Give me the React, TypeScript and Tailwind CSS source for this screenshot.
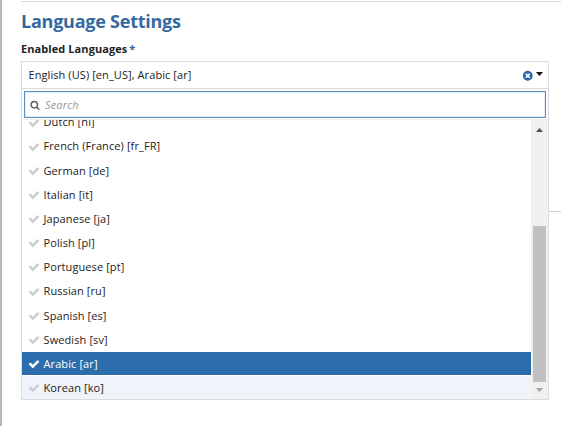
const CHECK =
  "M1671 566q0 40-28 68l-724 724-136 136q-28 28-68 28t-68-28l-136-136-362-362q-28-28-28-68t28-68l136-136q28-28 68-28t68 28l294 295 656-657q28-28 68-28t68 28l136 136q28 28 28 68z";
const CLEAR =
  "M1277 1122q0-26-19-45l-181-181 181-181q19-19 19-45 0-27-19-46l-90-90q-19-19-46-19-26 0-45 19l-181 181-181-181q-19-19-45-19-27 0-46 19l-90 90q-19 19-19 46 0 26 19 45l181 181-181 181q-19 19-19 45 0 27 19 46l90 90q19 19 46 19 26 0 45-19l181-181 181 181q19 19 45 19 27 0 46-19l90-90q19-19 19-46zm387-226q0 209-103 385.5t-279.5 279.5-385.5 103-385.5-103-279.5-279.5-103-385.5 103-385.5 279.5-279.5 385.5-103 385.5 103 279.5 279.5 103 385.5z";
const SEARCH =
  "M1216 832q0-185-131.5-316.5t-316.5-131.5-316.5 131.5-131.5 316.5 131.5 316.5 316.5 131.5 316.5-131.5 131.5-316.5zm512 832q0 52-38 90t-90 38q-54 0-90-38l-343-342q-179 124-399 124-143 0-273.5-55.5t-225-150-150-225-55.5-273.5 55.5-273.5 150-225 225-150 273.5-55.5 273.5 55.5 225 150 150 225 55.5 273.5q0 220-124 399l343 343q37 37 37 90z";

function Icon({ d, className }: { d: string; className: string }) {
  return (
    <svg viewBox="0 0 1792 1792" className={className} fill="currentColor" aria-hidden="true">
      <path d={d} />
    </svg>
  );
}

type State = "normal" | "selected" | "hover";

const LANGUAGES: { label: string; state: State }[] = [
  { label: "Dutch [nl]", state: "normal" },
  { label: "French (France) [fr_FR]", state: "normal" },
  { label: "German [de]", state: "normal" },
  { label: "Italian [it]", state: "normal" },
  { label: "Japanese [ja]", state: "normal" },
  { label: "Polish [pl]", state: "normal" },
  { label: "Portuguese [pt]", state: "normal" },
  { label: "Russian [ru]", state: "normal" },
  { label: "Spanish [es]", state: "normal" },
  { label: "Swedish [sv]", state: "normal" },
  { label: "Arabic [ar]", state: "selected" },
  { label: "Korean [ko]", state: "hover" },
];

const ROW: Record<State, string> = {
  normal: "text-[#222]",
  selected: "bg-[#2c6dac] text-white",
  hover: "bg-[#eff4fa] text-[#222]",
};

function Option({ label, state }: { label: string; state: State }) {
  return (
    <li className={`flex h-[24.17px] shrink-0 items-center border-b border-white pt-[1.65px] pl-[6px] text-[11px] tracking-[0.1px] last:-mb-px ${ROW[state]}`}>
      <Icon d={CHECK} className={`mr-[3.5px] size-[12px] ${state === "selected" ? "text-white" : "text-[#cdcdcd]"}`} />
      <span>{label}</span>
    </li>
  );
}

export default function App() {
  return (
    <main className="relative flex h-[426px] w-[561px] flex-col overflow-hidden border-l-2 border-[#b7b7b7] bg-white pl-[19px] font-['Open_Sans','Noto_Sans',sans-serif] text-[#222]">
      <div className="mt-px h-px shrink-0 bg-[#d9d9d9]" />
      <h1 className="mt-[6px] h-[26px] shrink-0 text-[18px] leading-[26px] font-bold tracking-[-0.24px] text-[#35699f]">Language Settings</h1>
      <label className="mt-[7px] h-[16px] shrink-0 text-[11px] leading-[16px] font-bold tracking-[0.08px]">
        Enabled Languages <span className="-ml-px text-[#35699f]">*</span>
      </label>
      <section className="mt-[4px] flex h-[339px] w-[528px] shrink-0 flex-col border border-[#dcdcdc] bg-white">
        <div className="flex h-[27px] shrink-0 items-center border-b border-[#dcdcdc] pr-[5px] pl-[6.5px] text-[11px] tracking-[0.08px]">
          <span className="flex-1">English (US) [en_US], Arabic [ar]</span>
          <Icon d={CLEAR} className="mt-px mr-[3px] size-[11.5px] text-[#2668aa]" />
          <svg viewBox="0 0 7 4" className="mb-[2px] h-[4px] w-[7px]" fill="#111"><path d="M0 0h7L3.5 4z" /></svg>
        </div>
        <div className="mx-[2px] mt-[2px] flex h-[27px] shrink-0 items-center border border-[#5a8fc0] pt-px pl-[5px] text-[11px] tracking-[0.15px] text-[#999] italic shadow-[inset_0_0_0_1px_#e3eefa]">
          <Icon d={SEARCH} className="mr-[5px] size-[10px] text-[#606060]" />
          Search
        </div>
        <div className="mt-px flex min-h-0 flex-1 border-t border-[#eeeeee]">
          <ul className="flex min-w-0 flex-1 flex-col justify-end overflow-hidden">
            {LANGUAGES.map((l) => (
              <Option key={l.label} label={l.label} state={l.state} />
            ))}
          </ul>
          <div className="flex w-[17px] flex-col items-center bg-[#f0f0f0]">
            <svg viewBox="0 0 7 4" className="mt-[8px] h-[4px] w-[7px] shrink-0" fill="#505050"><path d="M0 4h7L3.5 0z" /></svg>
            <div className="mt-[94px] h-[156px] w-[13px] shrink-0 bg-[#c1c1c1]" />
            <svg viewBox="0 0 7 4" className="mt-[6px] h-[4px] w-[7px] shrink-0" fill="#a3a3a3"><path d="M0 0h7L3.5 4z" /></svg>
          </div>
        </div>
      </section>
      <div className="absolute top-[211px] right-0 h-px w-[12px] bg-[#d0d0d0]" />
    </main>
  );
}
